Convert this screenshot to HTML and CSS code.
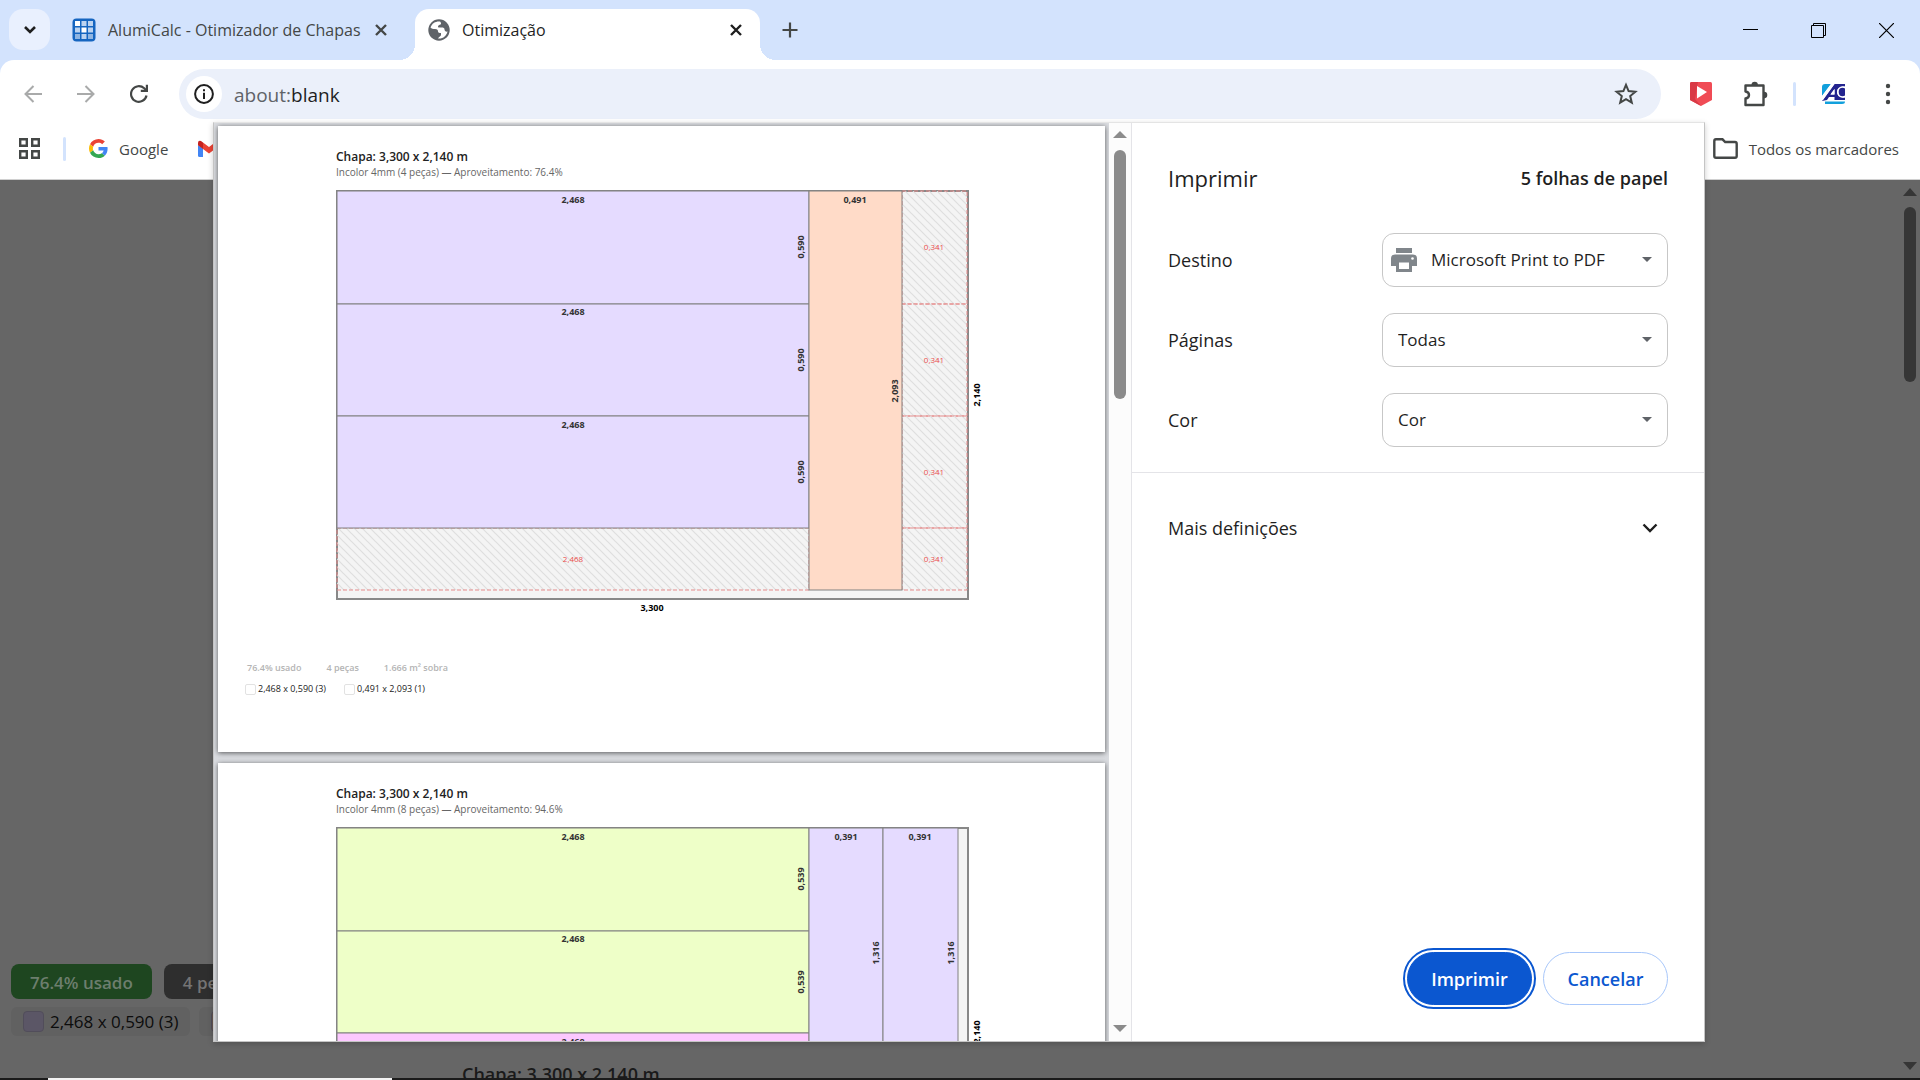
FILE: index.html
```html
<!DOCTYPE html>
<html lang="pt">
<head>
<meta charset="utf-8">
<meta name="viewport" content="width=device-width, initial-scale=1">
<title>Otimização</title>
<link rel="stylesheet" href="styles.css">
</head>
<body>
<header class="browser">
  <div class="tabstrip">
    <button class="tab-search" aria-label="Pesquisar separadores"><svg width="14" height="10" viewBox="0 0 14 10"><path d="M2 2l5 5 5-5" fill="none" stroke="#1f1f1f" stroke-width="2.6"/></svg></button>
    <div class="tab">
      <svg class="favicon" width="24" height="24" viewBox="0 0 24 24"><rect x=".5" y=".5" width="23" height="23" rx="4" fill="#1565c0"/><g fill="#bcd3f0"><rect x="3" y="3" width="5" height="5" fill="#fff"/><rect x="9.500" y="3" width="5" height="5"/><rect x="16" y="3" width="5" height="5"/><rect x="3" y="9.500" width="5" height="5"/><rect x="9.500" y="9.500" width="5" height="5" fill="#fff"/><rect x="16" y="9.500" width="5" height="5"/><rect x="3" y="16" width="5" height="5" fill="#8fb5e2"/><rect x="9.500" y="16" width="5" height="5"/><rect x="16" y="16" width="5" height="5" fill="#8fb5e2"/></g></svg>
      <span class="tab-title">AlumiCalc - Otimizador de Chapas</span>
      <button class="tab-close" aria-label="Fechar"><svg width="14" height="14" viewBox="0 0 14 14"><path d="M2 2l10 10M12 2L2 12" stroke="#444746" stroke-width="2.400"/></svg></button>
    </div>
    <div class="tab tab-active">
      <svg class="favicon" width="22" height="22" viewBox="0 0 22 22"><circle cx="11" cy="11" r="10.700" fill="#5f6368"/><path d="M12 2.500C8 2 4 4 2.500 8.500c1 1.500 2.500 1.500 4.500 1.500 2.500 0 3 1 3 2.500s1.500 1.500 3 1.500v2c0 1-2 1.500-3 3.500 5 .5 8.500-2.500 9.500-7-1.500.5-3-.5-3-2s-1-2-3-2-3.500.5-3.500-1S11.500 6 12.500 5.500s.5-2-.5-3z" fill="#fff"/></svg>
      <span class="tab-title">Otimização</span>
      <button class="tab-close" aria-label="Fechar"><svg width="14" height="14" viewBox="0 0 14 14"><path d="M2 2l10 10M12 2L2 12" stroke="#1f1f1f" stroke-width="2.400"/></svg></button>
    </div>
    <button class="new-tab" aria-label="Novo separador"><svg width="16" height="16" viewBox="0 0 16 16"><path d="M8 .5v15M.5 8h15" stroke="#444746" stroke-width="2.200"/></svg></button>
    <div class="window-controls">
      <button aria-label="Minimizar"><svg width="15" height="15" viewBox="0 0 15 15"><path d="M0 6.500h15" stroke="#000"/></svg></button>
      <button aria-label="Restaurar"><svg width="15" height="15" viewBox="0 0 15 15"><path d="M.5 2.500h12v12H.5zM2.500 2.500v-2h12v12h-2" fill="none" stroke="#000"/></svg></button>
      <button aria-label="Fechar janela"><svg width="15" height="15" viewBox="0 0 15 15"><path d="M0 0l15 15M15 0L0 15" stroke="#000" stroke-width="1.200"/></svg></button>
    </div>
  </div>
  <div class="toolbar">
    <nav class="nav">
      <button aria-label="Retroceder"><svg width="18" height="18" viewBox="0 0 18 18"><path d="M18 9H2M9.500 1L1.500 9l8 8" fill="none" stroke="#a9aaaa" stroke-width="2"/></svg></button>
      <button aria-label="Avançar"><svg width="18" height="18" viewBox="0 0 18 18"><path d="M0 9h16M8.500 1l8 8-8 8" fill="none" stroke="#a9aaaa" stroke-width="2"/></svg></button>
      <button aria-label="Recarregar"><svg width="20" height="20" viewBox="0 0 20 20"><path d="M16.500 11.500a7.800 7.800 0 1 1-2.300-7.200L17 7" fill="none" stroke="#444746" stroke-width="2.200"/><path d="M18 .8V8h-7.200V5.800h5V.8z" fill="#444746"/></svg></button>
    </nav>
    <div class="omnibox">
      <button class="site-info" aria-label="Informações do site"><svg width="20" height="20" viewBox="0 0 20 20"><circle cx="10" cy="10" r="8.900" fill="none" stroke="#1f1f1f" stroke-width="2"/><path d="M10 8.800V15M10 5.200v2" stroke="#1f1f1f" stroke-width="2"/></svg></button>
      <label class="url"><span class="scheme">about:</span><input type="text" value="blank" aria-label="Endereço"></label>
      <button aria-label="Adicionar aos marcadores"><svg width="24" height="24" viewBox="0 0 24 24"><path d="M12 2.800l2.600 6.300 6.800.6-5.200 4.400 1.600 6.600-5.800-3.500-5.800 3.500 1.600-6.600-5.200-4.400 6.800-.6z" fill="none" stroke="#444746" stroke-width="2"/></svg></button>
    </div>
    <div class="extensions">
      <button aria-label="Extensão de vídeo"><svg width="22" height="24" viewBox="0 0 22 24"><path d="M0 1.500Q0 0 1.500 0h19Q22 0 22 1.500V18l-11 6L0 18z" fill="#f04b55"/><path d="M0 1.500Q0 0 1.500 0H8L5 17l6 7-11-6z" fill="#d93a46"/><path d="M7 4v12.500L17 10z" fill="#fff"/></svg></button>
      <button aria-label="Extensões"><svg width="26" height="26" viewBox="0 0 26 26"><path d="M2.500 4.500H20.500V24H2.500V17.500q3.500-.5 3.500-3.500T2.500 10.500z" fill="none" stroke="#444746" stroke-width="2.400" stroke-linejoin="round"/><path d="M8.500 4a3.200 3.200 0 0 1 6.400 0zM21 10.800a3.300 3.300 0 0 1 0 6.600z" fill="#444746"/></svg></button>
      <span class="divider"></span>
      <button class="profile" aria-label="Perfil"><svg width="23" height="20" viewBox="0 0 23 20"><path d="M0 12V3q0-3 3-3h6z" fill="#12a0dc"/><path d="M0 17L12.500 0H23v2.500h-2Q15 3 15 8t6 5.500h2V16H12.500v-3H7l-2 3z" fill="#23248f"/><path d="M0 12L9 0h3.500L1 16H0zM8.500 10.500l4-5.500v5.500z" fill="#fff"/><path d="M12.500 5L8.500 10.500h4z" fill="#fff"/><ellipse cx="20.500" cy="8" rx="4.600" ry="5" fill="#23248f" stroke="#fff" stroke-width="1.600"/><path d="M3 17.500h20q0 2.500-3 2.500H3z" fill="#12a0dc"/></svg></button>
      <button aria-label="Menu"><svg width="6" height="22" viewBox="0 0 6 22"><g fill="#444746"><circle cx="3" cy="3" r="2.200"/><circle cx="3" cy="11" r="2.200"/><circle cx="3" cy="19" r="2.200"/></g></svg></button>
    </div>
  </div>
  <div class="bookmarks">
    <button aria-label="Aplicações"><svg width="22" height="22" viewBox="0 0 22 22"><path d="M1.200 1.200h6.600v6.600H1.200zM13.200 1.200h6.600v6.600h-6.600zM1.200 13.200h6.600v6.600H1.200zM13.200 13.200h6.600v6.600h-6.600z" fill="none" stroke="#444746" stroke-width="2.400"/></svg></button>
    <span class="divider"></span>
    <a href="#"><svg width="19" height="19" viewBox="0 0 48 48"><path fill="#EA4335" d="M24 9.500c3.540 0 6.710 1.220 9.210 3.600l6.850-6.850C35.900 2.380 30.470 0 24 0 14.620 0 6.510 5.380 2.560 13.220l7.980 6.190C12.430 13.720 17.740 9.500 24 9.500z"/><path fill="#4285F4" d="M46.980 24.550c0-1.570-.15-3.090-.38-4.550H24v9.020h12.940c-.58 2.960-2.260 5.480-4.780 7.180l7.730 6c4.510-4.180 7.090-10.360 7.090-17.650z"/><path fill="#FBBC05" d="M10.530 28.590c-.48-1.450-.76-2.990-.76-4.590s.27-3.140.76-4.590l-7.980-6.190C.92 16.460 0 20.120 0 24c0 3.880.92 7.540 2.560 10.780z"/><path fill="#34A853" d="M24 48c6.480 0 11.930-2.130 15.890-5.810l-7.730-6c-2.150 1.450-4.920 2.300-8.160 2.300-6.260 0-11.570-4.220-13.470-9.910l-7.980 6.190C6.510 42.620 14.620 48 24 48z"/></svg>Google</a>
    <a class="gmail" href="#" aria-label="Gmail"><svg width="22" height="18" viewBox="0 0 22 18"><path d="M0 5l5 3.500V17H1.500Q0 17 0 15.500z" fill="#4285f4"/><path d="M22 5l-5 3.500V17h3.500q1.500 0 1.500-1.500z" fill="#34a853"/><path d="M5 2.500l6 4.600 6-4.600v6.500l-6 4.500-6-4.500z" fill="#ea4335"/><path d="M0 3q0-3 3-2l2 1.500V9L0 5.200z" fill="#c5221f"/><path d="M22 3q0-3-3-2l-2 1.500V9l5-3.800z" fill="#fbbc04"/></svg></a>
    <a class="all-bookmarks" href="#"><svg width="25" height="21" viewBox="0 0 25 21"><path d="M1.300 3q0-1.700 1.700-1.700h6.500l2.700 2.700h9.800q1.700 0 1.700 1.700V18q0 1.700-1.700 1.700H3Q1.300 19.700 1.300 18z" fill="none" stroke="#444746" stroke-width="2.400"/></svg>Todos os marcadores</a>
  </div>
</header>

<main class="viewport">
  <section class="report">
    <div class="chips"><span class="chip chip-used">76.4% usado</span><span class="chip">4 peças</span></div>
    <ul class="legend">
      <li><i class="swatch swatch-lilac"></i>2,468 x 0,590 (3)</li>
      <li><i class="swatch swatch-peach"></i>0,491 x 2,093 (1)</li>
    </ul>
    <h2 class="report-title">Chapa: 3,300 x 2,140 m</h2>
  </section>
  <div class="page-scroll">
    <svg width="14" height="8" viewBox="0 0 14 8"><path d="M0 8l7-8 7 8z" fill="#363636"/></svg>
    <span class="page-thumb"></span>
    <svg width="14" height="8" viewBox="0 0 14 8"><path d="M0 0l7 8 7-8z" fill="#363636"/></svg>
  </div>
</main>
<footer class="taskbar"><span class="taskbar-search"></span></footer>

<div class="dialog" role="dialog" aria-label="Imprimir">
  <div class="preview">
    <article class="sheet">
      <h3 class="sheet-title">Chapa: 3,300 x 2,140 m</h3>
      <p class="sheet-sub">Incolor 4mm (4 peças) — Aproveitamento: 76.4%</p>
      <svg class="plan" width="652" height="430" viewBox="0 0 652 430">
        <defs><pattern id="hatch" width="8" height="8" patternUnits="userSpaceOnUse"><path d="M-2-2L10 10M-2 6l4 4M6-2l4 4" stroke="#dedede" stroke-width="1.200"/></pattern></defs>
        <rect class="plate" x="1" y="1" width="631" height="408"/>
        <g class="waste"><rect x="1" y="338" width="472" height="62"/><rect x="566" y="1" width="65" height="113"/><rect x="566" y="114" width="65" height="112"/><rect x="566" y="226" width="65" height="112"/><rect x="566" y="338" width="65" height="62"/></g>
        <g class="lilac"><rect x="1" y="1" width="472" height="113"/><rect x="1" y="114" width="472" height="112"/><rect x="1" y="226" width="472" height="112"/></g>
        <rect class="peach" x="473" y="1" width="93" height="399"/>
        <g class="measure">
          <text x="237" y="13">2,468</text><text x="237" y="125">2,468</text><text x="237" y="238">2,468</text><text x="519" y="13">0,491</text>
          <text transform="translate(468 57) rotate(-90)">0,590</text><text transform="translate(468 170) rotate(-90)">0,590</text><text transform="translate(468 282) rotate(-90)">0,590</text>
          <text transform="translate(562 201) rotate(-90)">2,093</text>
        </g>
        <g class="leftover"><text x="237" y="372">2,468</text><text x="598" y="60">0,341</text><text x="598" y="173">0,341</text><text x="598" y="285">0,341</text><text x="598" y="372">0,341</text></g>
        <g class="outer"><text x="316" y="421">3,300</text><text transform="translate(644 205) rotate(-90)">2,140</text></g>
      </svg>
      <div class="sheet-stats"><span>76.4% usado</span><span>4 peças</span><span>1.666 m² sobra</span></div>
      <ul class="sheet-legend"><li><i></i>2,468 x 0,590 (3)</li><li><i></i>0,491 x 2,093 (1)</li></ul>
    </article>
    <article class="sheet">
      <h3 class="sheet-title">Chapa: 3,300 x 2,140 m</h3>
      <p class="sheet-sub">Incolor 4mm (8 peças) — Aproveitamento: 94.6%</p>
      <svg class="plan" width="652" height="430" viewBox="0 0 652 430">
        <rect class="plate" x="1" y="1" width="631" height="408"/>
        <g class="lime"><rect x="1" y="1" width="472" height="103"/><rect x="1" y="104" width="472" height="102"/></g>
        <rect class="pink" x="1" y="206" width="472" height="103"/>
        <g class="lilac"><rect x="473" y="1" width="74" height="251"/><rect x="547" y="1" width="75" height="251"/></g>
        <g class="measure">
          <text x="237" y="13">2,468</text><text x="237" y="115">2,468</text><text x="237" y="218">2,468</text><text x="510" y="13">0,391</text><text x="584" y="13">0,391</text>
          <text transform="translate(468 52) rotate(-90)">0,539</text><text transform="translate(468 155) rotate(-90)">0,539</text>
          <text transform="translate(543 126) rotate(-90)">1,316</text><text transform="translate(618 126) rotate(-90)">1,316</text>
        </g>
        <g class="outer"><text transform="translate(644 205) rotate(-90)">2,140</text></g>
      </svg>
    </article>
  </div>
  <div class="preview-scroll">
    <svg width="14" height="7" viewBox="0 0 14 7"><path d="M0 7l7-7 7 7z" fill="#8b8b8b"/></svg>
    <span class="preview-thumb"></span>
    <svg width="14" height="7" viewBox="0 0 14 7"><path d="M0 0l7 7 7-7z" fill="#8b8b8b"/></svg>
  </div>
  <form class="settings">
    <div class="settings-head"><h1>Imprimir</h1><span>5 folhas de papel</span></div>
    <div class="fields">
      <div class="field"><label for="destino">Destino</label>
        <div class="select select-icon"><select id="destino"><option>Microsoft Print to PDF</option></select>
          <svg class="printer" width="26" height="24" viewBox="0 0 26 24"><path d="M5 0h16v5H5zM4 6.500h18q4 0 4 4V18h-5v6H5v-6H0v-7.500q0-4 4-4z" fill="#80868b"/><path d="M8 14.500h10v6.500H8z" fill="#fff"/><circle cx="21.500" cy="10.500" r="1.300" fill="#fff"/></svg>
          <svg class="arrow" width="10" height="5" viewBox="0 0 10 5"><path d="M0 0h10L5 5z" fill="#5f6368"/></svg></div></div>
      <div class="field"><label for="paginas">Páginas</label>
        <div class="select"><select id="paginas"><option>Todas</option></select><svg class="arrow" width="10" height="5" viewBox="0 0 10 5"><path d="M0 0h10L5 5z" fill="#5f6368"/></svg></div></div>
      <div class="field"><label for="cor">Cor</label>
        <div class="select"><select id="cor"><option>Cor</option></select><svg class="arrow" width="10" height="5" viewBox="0 0 10 5"><path d="M0 0h10L5 5z" fill="#5f6368"/></svg></div></div>
    </div>
    <button type="button" class="more">Mais definições<svg width="16" height="10" viewBox="0 0 16 10"><path d="M1.500 1.500L8 8l6.500-6.500" fill="none" stroke="#1f1f1f" stroke-width="2.400"/></svg></button>
    <div class="actions"><button type="button" class="btn btn-primary">Imprimir</button><button type="button" class="btn">Cancelar</button></div>
  </form>
</div>
</body>
</html>
```
FILE: styles.css
```css
* { box-sizing: border-box; }
body {
  margin: 0;
  height: 100vh;
  overflow: hidden;
  position: relative;
  display: flex;
  flex-direction: column;
  font-family: "Open Sans", "Noto Sans", sans-serif;
  color: #1f1f1f;
}
button {
  border: 0;
  padding: 0;
  background: none;
  font: inherit;
  color: inherit;
  display: flex;
  align-items: center;
  justify-content: center;
}
svg { display: block; flex: none; }
h1, h2, h3, p, ul { margin: 0; padding: 0; font-weight: 400; }
ul { list-style: none; display: flex; }
a { color: inherit; text-decoration: none; }

/* Tab strip */
.browser { flex: none; background: #d3e3fd; }
.tabstrip { height: 60px; display: flex; padding-left: 9px; }
.tab-search { width: 41px; height: 41px; margin-top: 9px; border-radius: 14px; background: #e9f0fe; }
.tab {
  width: 345px;
  height: 51px;
  margin-top: 9px;
  padding: 0 17px 9px 13px;
  display: flex;
  align-items: center;
  gap: 12px;
  font-size: 16px;
  line-height: 24px;
  color: #444746;
}
.tab:not(.tab-active) { margin-left: 9px; width: 356px; padding-right: 27px; }
.tab-title { flex: 1; white-space: nowrap; }
.tab-active { background: #fff; border-radius: 14px 14px 0 0; color: #1f1f1f; position: relative; }
.tab-active::before, .tab-active::after {
  content: "";
  position: absolute;
  bottom: 0;
  width: 16px;
  height: 16px;
  background: radial-gradient(circle at 0 0, transparent 16px, #fff 16px);
  left: -16px;
}
.tab-active::after { left: auto; right: -16px; transform: scaleX(-1); }
.new-tab { width: 60px; }
.window-controls { margin-left: auto; display: flex; }
.window-controls button { width: 68px; }

/* Toolbar */
.toolbar {
  height: 64px;
  display: flex;
  align-items: center;
  background: #fff;
  border-radius: 14px 14px 0 0;
  padding: 4px 0 0 24px;
}
.nav { display: flex; gap: 35px; width: 155px; }
.omnibox {
  flex: 1;
  height: 50px;
  border-radius: 25px;
  background: #ebf0fa;
  display: flex;
  align-items: center;
  padding: 0 23px 0 7px;
}
.site-info { width: 36px; height: 36px; border-radius: 50%; background: #fff; }
.url { flex: 1; display: flex; margin-left: 12px; padding-top: 2px; font-size: 19px; line-height: 28px; }
.scheme { color: #5f6368; }
.url input { flex: 1; border: 0; padding: 0; background: none; font: inherit; color: #1f1f1f; outline: 0; }
.extensions { display: flex; align-items: center; width: 259px; padding-left: 29px; }
.extensions button + button { margin-left: 31px; }
.extensions .profile + button { margin-left: 40px; }
.divider { width: 3px; height: 24px; border-radius: 2px; background: #d3e3fd; }
.extensions .divider { margin: 0 26px 0 24px; }

/* Bookmarks */
.bookmarks {
  height: 56px;
  display: flex;
  align-items: center;
  background: #fff;
  border-bottom: 1px solid #d0d0d0;
  padding: 0 21px 6px 19px;
  font-size: 15px;
  line-height: 22px;
  color: #444746;
}
.bookmarks a { display: flex; align-items: center; gap: 11px; margin-left: 23px; }
.bookmarks .gmail { margin-left: 30px; }
.bookmarks .divider { margin-left: 22px; }
.bookmarks .all-bookmarks { margin-left: auto; }

/* Dimmed page */
.viewport { flex: 1; min-height: 0; overflow: hidden; background: #666; display: flex; justify-content: space-between; }
.report { flex: 1; display: flex; flex-direction: column; justify-content: flex-end; padding-left: 11px; }
.chips { display: flex; gap: 12px; }
.chip {
  height: 35px;
  padding: 0 19px;
  border-radius: 8px;
  background: #2e2e2e;
  color: #747474;
  font-size: 17px;
  font-weight: 600;
  line-height: 37px;
}
.chip-used { background: #1e4620; color: #6d7e6e; }
.legend { margin-top: 8px; gap: 9px; font-size: 17px; line-height: 30px; color: #0c0c0c; }
.legend li { height: 29px; padding: 0 12px; border-radius: 6px; background: #616161; display: flex; align-items: center; gap: 6px; }
.swatch { width: 21px; height: 21px; border-radius: 4px; border: 1px solid #514d5a; background: #5b5666; }
.swatch-peach { background: #66574f; }
.report-title { padding-left: 451px; margin: 25px 0 -9px; font-size: 18px; line-height: 26px; font-weight: 600; color: #1a1a1a; }
.page-scroll { width: 20px; display: flex; flex-direction: column; align-items: center; padding: 8px 0; }
.page-thumb { width: 12px; height: 175px; margin: 11px 0 auto; border-radius: 6px; background: #363636; }
.taskbar { flex: none; height: 2px; background: #1b1b1b; padding-left: 48px; display: flex; }
.taskbar-search { width: 344px; background: #f3f3f3; }

/* Print dialog */
.dialog {
  position: absolute;
  top: 122px;
  bottom: 38px;
  left: 0;
  right: 2px;
  width: min(1492px, 96%);
  margin: 0 auto;
  display: flex;
  background: #fff;
  border: 1px solid #c4c4c4;
  border-top-color: #e4e4e4;
  box-shadow: 0 2px 6px rgba(0, 0, 0, .2);
}
.preview { flex: 1; min-width: 0; overflow: hidden; background: #dadce0; padding: 3px 4px; display: flex; flex-direction: column; gap: 11px; }
.sheet { flex: none; height: 626px; background: #fff; padding: 23px 0 0 118px; box-shadow: 0 1px 5px rgba(0, 0, 0, .6); }
.sheet-title { font-size: 12px; line-height: 16px; font-weight: 600; color: #222; }
.sheet-sub { font-size: 10px; line-height: 14px; color: #666; }
.plan { margin-top: 11px; }
.plate { fill: #f4f4f4; stroke: #888; stroke-width: 2; }
.lilac, .peach, .lime, .pink { stroke: #808080; }
.lilac { fill: #e5dbff; }
.peach { fill: #ffdbc8; }
.lime { fill: #eeffc8; }
.pink { fill: #fcc8ff; }
.waste { fill: url(#hatch); stroke: #e58a8a; stroke-dasharray: 4 2; }
.measure, .leftover, .outer { font-size: 9px; text-anchor: middle; }
.measure { font-weight: 700; fill: #333; }
.leftover { font-size: 8px; fill: #ea4c4c; }
.outer { font-weight: 700; fill: #000; }
.sheet-stats { display: flex; gap: 25px; margin: 40px 0 0 -89px; font-size: 9px; line-height: 16px; font-weight: 600; color: #b4b4b4; }
.sheet-legend { gap: 18px; margin: 5px 0 0 -91px; font-size: 9px; line-height: 16px; font-weight: 500; color: #222; }
.sheet-legend li { display: flex; align-items: center; gap: 2px; }
.sheet-legend i { width: 11px; height: 11px; border: 1px solid #e2e2e2; border-radius: 2px; }
.preview-scroll { width: 23px; flex: none; background: #fcfcfc; border-right: 1px solid #e4e4e8; display: flex; flex-direction: column; align-items: center; padding: 8px 0 9px; }
.preview-thumb { width: 12px; height: 249px; margin: 12px 0 auto; border-radius: 6px; background: #8b8b8b; }

/* Settings column */
.settings { width: 572px; flex: none; display: flex; flex-direction: column; font-size: 18px; line-height: 26px; }
.settings-head { display: flex; justify-content: space-between; align-items: center; padding: 38px 36px 0; }
.settings-head h1 { font-size: 22px; line-height: 34px; }
.settings-head span { font-weight: 600; }
.fields { padding: 38px 36px 25px; display: flex; flex-direction: column; gap: 26px; border-bottom: 1px solid #e4e4e8; }
.field { display: flex; align-items: center; justify-content: space-between; }
.select { position: relative; width: 286px; }
.select select {
  width: 100%;
  height: 54px;
  appearance: none;
  border: 1px solid #c7c7c7;
  border-radius: 12px;
  background: #fff;
  padding: 0 40px 0 15px;
  font: inherit;
  font-size: 17px;
  color: inherit;
}
.select-icon select { padding-left: 48px; }
.printer { position: absolute; left: 9px; top: 15px; }
.arrow { position: absolute; right: 16px; top: 24px; }
.more { justify-content: space-between; padding: 42px 46px 42px 36px; }
.actions { margin-top: auto; display: flex; justify-content: flex-end; gap: 11px; padding: 0 36px 36px; }
.btn { height: 53px; min-width: 125px; border-radius: 27px; border: 1px solid #a8c7fa; color: #0b57d0; font-weight: 600; font-size: 18px; }
.btn-primary { background: #0b57d0; border-color: #0b57d0; color: #fff; outline: 2px solid #0b57d0; outline-offset: 2px; }
```
